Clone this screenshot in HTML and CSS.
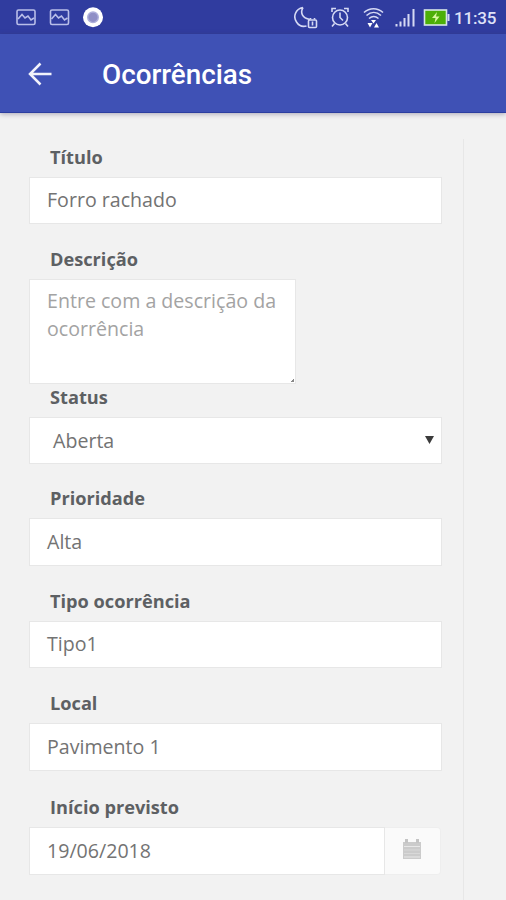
FILE: index.html
```html
<!DOCTYPE html>
<html lang="pt-BR">
<head>
<meta charset="utf-8">
<title>Ocorrências</title>
<link rel="stylesheet" href="styles.css">
</head>
<body>
<div class="statusbar">
  <svg class="notifications" width="110" height="34" viewBox="0 0 110 34" fill="none" stroke="#b9bee9" stroke-width="1.6">
    <rect x="17" y="10" width="18" height="14.5" rx="1.5"/>
    <path d="M18 19l4-4.5 3 3.500 3-2 3 4 3-2"/>
    <rect x="50.500" y="10" width="18" height="14.500" rx="1.500"/>
    <path d="M51.500 19l4-4.500 3 3.500 3-2 3 4 3-2"/>
    <circle cx="93" cy="17.300" r="10" fill="#fff" stroke="none"/>
    <circle cx="93" cy="17.300" r="5.300" fill="#8f8fc6" stroke="#aeb0dc" stroke-width="1.400"/>
  </svg>
  <div class="system">
    <svg width="160" height="34" viewBox="0 0 160 34" fill="none" stroke="#d5d9f4" stroke-width="1.600">
      <path d="M9 7.500c-8 1.500-10 9.500-6.500 14.500 2.500 4 6.500 5 10 4M9 7.500c-3 5-1 10.500 7 12"/>
      <rect x="14.500" y="20" width="8" height="7.500" rx="1"/>
      <path d="M16.500 19.500v-1.500M20.500 19.500v-1.500M18.500 21.500v4"/>
      <circle cx="46" cy="17.500" r="7.500"/>
      <path d="M46 12.500v5l3 3M38 12V8.500h4M50 8.500h4V12M40.500 23.500l-2.500 3M51.500 23.500l2.500 3"/>
      <path d="M70 12.500c5.500-5 13.500-5 19 0M72.500 15.500c4.500-4 10-4 14.500 0M75 18.500c3-2.500 6.500-2.500 9.500 0"/>
      <path d="M77 20h5l-2.500 3.500zM73.500 23h5l-2.500 4.500zM80 27.500h5l-2.500-4.500z" fill="#fff" stroke="none"/>
      <path d="M102.500 24v2.500M106.500 21.500v5M110.500 18v8.500M114.500 14v12.500M119.500 9v17.500" stroke-width="2"/>
      <rect x="130.500" y="10" width="22" height="15" fill="#4caf08" stroke="#d8e6e6"/>
      <path d="M154.500 14v7" stroke-width="2"/>
      <path d="M143 12l-5 6h3.500l-1 5 5-6.500h-3.500z" fill="#d7f6a0" stroke="none"/>
    </svg>
    <span class="clock">11:35</span>
  </div>
</div>
<header class="appbar">
  <svg class="back" width="24" height="24" viewBox="0 0 24 24" fill="none" stroke="#f1f2fb" stroke-width="2.500"><path d="M23.500 12H2.500M12.500 1.500L2 12l10.500 10.500"/></svg>
  <h1>Ocorrências</h1>
</header>
<main>
  <form class="form">
    <div class="group"><label>Título</label><div class="control">Forro rachado</div></div>
    <div class="group tight"><label>Descrição</label><div class="control area">Entre com a descrição da ocorrência<i class="grip"></i></div></div>
    <div class="group status"><label>Status</label><div class="control select">Aberta<svg width="9" height="8" viewBox="0 0 9 8"><path d="M0 0h9L4.500 8z" fill="#3b3b3b"/></svg></div></div>
    <div class="group"><label>Prioridade</label><div class="control tall">Alta</div></div>
    <div class="group"><label>Tipo ocorrência</label><div class="control">Tipo1</div></div>
    <div class="group local"><label>Local</label><div class="control tall">Pavimento 1</div></div>
    <div class="group"><label>Início previsto</label>
      <div class="date"><div class="control tall">19/06/2018</div>
        <div class="addon"><svg width="18" height="20" viewBox="0 0 18 20"><path d="M0 3h18v17H0z" fill="#cbcbcb"/><path d="M2 0h3v4H2zM13 0h3v4h-3z" fill="#c4c4c4"/><path d="M1 7.500h16M1 18h16" stroke="#e8e8e8"/><path d="M1 11h16M1 14.500h16" stroke="#d8d8d8"/></svg></div>
      </div>
    </div>
  </form>
</main>
</body>
</html>
```
FILE: styles.css
```css
* { box-sizing: border-box; }
body {
  margin: 0;
  height: 900px;
  overflow: hidden;
  background: #f2f2f2;
  color: #737373;
  font: 19.6px/28px "Open Sans", "Noto Sans", sans-serif;
}
.statusbar {
  height: 34px;
  background: #303c9f;
  display: flex;
  justify-content: space-between;
}
.system { display: flex; padding-right: 10px; }
.clock {
  width: 42px;
  font: 500 17px/36px Roboto, sans-serif;
  letter-spacing: -.2px;
  color: #dfe2f8;
  white-space: nowrap;
}
.appbar {
  height: 79px;
  background: #3f51b5;
  border-bottom: 1px solid #2c3ea0;
  box-shadow: 0 1px 5px rgba(60, 50, 90, .4);
  display: flex;
  align-items: center;
  padding-left: 28px;
}
.back { margin: 2px 50px 0 0; }
h1 {
  margin: 3px 0 0;
  font: 500 27.8px/36px Roboto, sans-serif;
  color: #fff;
}
main { padding-top: 26px; }
.form {
  width: 464px;
  height: 761px;
  padding-left: 29px;
  border-right: 1px solid #e7e7e7;
}
.group { margin-bottom: 17px; }
.group.tight { margin-bottom: -5px; }
.group.status { margin-bottom: 16px; }
.group.local { margin-bottom: 18px; }
label {
  display: block;
  height: 38px;
  padding: 4px 0 0 21px;
  font-size: 18.2px;
  font-weight: 700;
  color: #5d6063;
}
.control {
  position: relative;
  width: 413px;
  height: 47px;
  padding: 8px 17px;
  background: #fff;
  border: 1px solid #e7e7e7;
}
.control.tall { height: 48px; padding-top: 9px; }
.control.area {
  width: 267px;
  height: 105px;
  padding: 7px 0 0 17px;
  color: #a3a3a3;
}
.grip {
  position: absolute;
  right: 1px;
  bottom: 1px;
  width: 3px;
  height: 3px;
  background: linear-gradient(135deg, transparent 40%, #888 40%);
}
.control.select {
  display: flex;
  justify-content: space-between;
  align-items: center;
  padding: 0 7px 0 23px;
}
.select svg { margin-bottom: 2px; }
.date { display: flex; }
.date .control { width: 356px; }
.addon {
  width: 56px;
  height: 48px;
  display: flex;
  align-items: center;
  justify-content: center;
  padding: 0 2px 5px 0;
  background: #fafafa;
  border: 1px solid #eeeeee;
  border-left: 0;
  border-radius: 0 4px 4px 0;
}
```
